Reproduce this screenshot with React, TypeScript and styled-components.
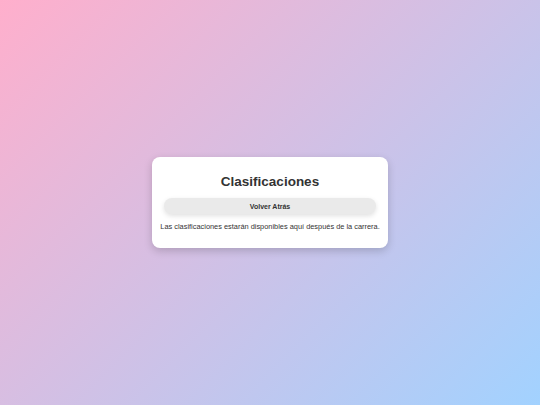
import React from "react";
import styled, { createGlobalStyle } from "styled-components";

const Global = createGlobalStyle`
  html, body { margin: 0; padding: 0; height: 100%; }
  body { font-family: "Liberation Sans", Arial, sans-serif; }
  #root { height: 100%; }
`;

const Page = styled.div`
  width: 540px;
  height: 405px;
  background: linear-gradient(135deg, #ffafcc 0%, #a2d2ff 100%);
  display: flex;
  align-items: center;
  justify-content: center;
`;

const Card = styled.div`
  background: #ffffff;
  border-radius: 8px;
  box-shadow: 0 3px 9px rgba(0, 0, 0, 0.18);
  padding: 17px 8px 17px;
  display: flex;
  flex-direction: column;
  align-items: center;
  width: 220px;
`;

const Title = styled.h1`
  margin: 0 0 9px;
  font-size: 13.5px;
  font-weight: 700;
  color: #333333;
`;

const BackButton = styled.button`
  width: 212px;
  height: 16px;
  border: none;
  border-radius: 8px;
  background: #eaeaea;
  box-shadow: 0 2px 5px rgba(0, 0, 0, 0.12);
  font-family: inherit;
  font-size: 7px;
  font-weight: 700;
  color: #333333;
  cursor: pointer;
  margin-bottom: 8px;
`;

const Note = styled.p`
  margin: 0;
  font-size: 7.4px;
  color: #333333;
  white-space: nowrap;
`;

export default function App() {
  return (
    <>
      <Global />
      <Page>
        <Card>
          <Title>Clasificaciones</Title>
          <BackButton>Volver Atrás</BackButton>
          <Note>Las clasificaciones estarán disponibles aquí después de la carrera.</Note>
        </Card>
      </Page>
    </>
  );
}
